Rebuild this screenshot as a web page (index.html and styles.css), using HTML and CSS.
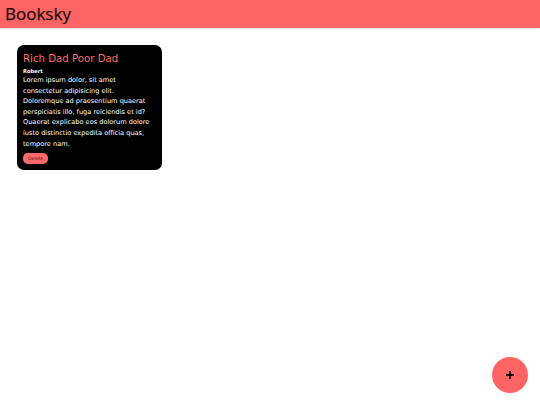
FILE: index.html
```html
<!DOCTYPE html>
<html lang="en">
<head>
<meta charset="utf-8">
<title>Booksky</title>
<link rel="stylesheet" href="styles.css">
</head>
<body>
<header class="topbar">
  <h1 class="brand">Booksky</h1>
</header>
<main class="books">
  <article class="book-card">
    <h2 class="book-title">Rich Dad Poor Dad</h2>
    <p class="book-author">Robert</p>
    <p class="book-desc">Lorem ipsum dolor, sit amet consectetur adipisicing elit. Doloremque ad praesentium quaerat perspiciatis illo, fuga reiciendis et id? Quaerat explicabo eos dolorum dolore iusto distinctio expedita officia quas, tempore nam.</p>
    <button class="delete-btn">Delete</button>
  </article>
</main>
<button class="fab" aria-label="Add book">
  <svg class="fab-icon" viewBox="0 0 10 10" width="10" height="10" aria-hidden="true">
    <path d="M5 1v8M1 5h8" stroke="#1a0a0a" stroke-width="1.8" stroke-linecap="butt"/>
  </svg>
</button>
</body>
</html>
```

FILE: styles.css
```css
* { box-sizing: border-box; }
html, body { margin: 0; padding: 0; }
body {
  font-family: "DejaVu Sans", "Open Sans", sans-serif;
  background: #ffffff;
  color: #000;
  width: 540px;
  height: 405px;
  overflow: hidden;
}
.topbar {
  height: 28px;
  background: #ff6464;
  display: flex;
  align-items: center;
  padding-left: 5px;
  box-shadow: 0 1px 2px rgba(0,0,0,0.12);
}
.brand {
  margin: 0;
  font-family: "Open Sans", sans-serif;
  font-size: 17px;
  font-weight: 500;
  color: #1a0a0a;
  line-height: 28px;
  -webkit-text-stroke: 0.25px #1a0a0a;
}
.books {
  padding: 17px;
  display: flex;
  flex-wrap: wrap;
  gap: 12px;
}
.book-card {
  width: 145px;
  background: #000;
  color: #fff;
  border-radius: 7px;
  padding: 6px 8px 6px 6px;
}
.book-title {
  margin: 0;
  font-size: 10.2px;
  font-weight: 400;
  line-height: 16px;
  color: #ff6b6b;
}
.book-author {
  margin: 0;
  font-size: 5.2px;
  font-weight: 700;
  line-height: 8px;
}
.book-desc {
  margin: 0;
  font-size: 6.6px;
  line-height: 10.6px;
}
.delete-btn {
  margin-top: 4px;
  border: none;
  background: #ff6b6b;
  color: #3a0808;
  font-family: inherit;
  font-size: 4.6px;
  padding: 0 5px;
  width: 25px;
  height: 11px;
  border-radius: 5px;
  display: block;
}
.fab {
  position: fixed;
  right: 12px;
  bottom: 12px;
  width: 36px;
  height: 36px;
  border-radius: 50%;
  border: none;
  background: #ff6464;
  padding: 0;
  display: flex;
  align-items: center;
  justify-content: center;
}
.fab-icon { display: block; }
```
